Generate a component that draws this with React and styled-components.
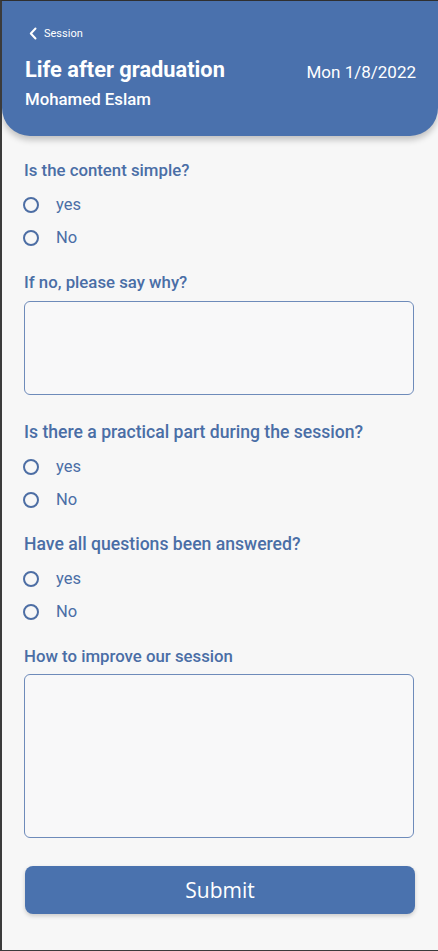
import React from "react";
import styled, { createGlobalStyle } from "styled-components";

const Global = createGlobalStyle`
  html, body { margin: 0; padding: 0; background: #f7f7f7; }
  * { box-sizing: border-box; }
  body { font-family: Roboto, "Noto Sans", Arial, sans-serif; }
`;

const Page = styled.div`
  width: 438px;
  height: 951px;
  background: #f7f7f7;
  border-left: 2px solid #3b3b3b;
  border-top: 1px solid #2f2f2f;
  border-bottom: 1px solid #3b3b3b;
  overflow: hidden;
`;

const Header = styled.header`
  background: #4a71ad;
  border-radius: 0 0 28px 28px;
  padding: 25px 22px 27px 23px;
  box-shadow: 0 4px 6px rgba(0, 0, 0, 0.22);
  color: #fff;
`;

const Back = styled.div`
  display: flex;
  align-items: center;
  gap: 7px;
  height: 14px;
  padding-left: 4px;
  font-size: 11px;
  color: #fff;
`;

const TitleRow = styled.div`
  display: flex;
  justify-content: space-between;
  align-items: center;
  margin-top: 17px;
  height: 26px;
`;

const Title = styled.h1`
  margin: 0;
  font-size: 21.8px;
  font-weight: 700;
  line-height: 24px;
`;

const DateText = styled.span`
  font-size: 17px;
  font-weight: 400;
  margin-top: 4px;
`;

const Speaker = styled.div`
  margin-top: 6px;
  font-size: 16.8px;
  font-weight: 500;
  line-height: 20px;
`;

const Form = styled.form`
  display: flex;
  flex-direction: column;
  gap: 18px;
  padding: 24px 24px 0 22px;
`;

const Section = styled.div`
  display: flex;
  flex-direction: column;
  gap: ${(p) => (p.$field ? "9px" : "8px")};
  margin-bottom: ${(p) => (p.$field ? "9px" : "0")};
`;

const Question = styled.div`
  font-size: ${(p) => p.$size || 16.8}px;
  font-weight: 500;
  line-height: 20px;
  color: #4a6ea6;
  white-space: nowrap;
`;

const RadioGroup = styled.div`
  display: flex;
  flex-direction: column;
`;

const RadioRow = styled.label`
  display: flex;
  align-items: center;
  height: 33px;
  gap: 17px;
  margin-left: -1px;
  font-size: 16.5px;
  color: #4a6ea6;
  cursor: pointer;
`;

const Circle = styled.span`
  width: 16px;
  height: 16px;
  border-radius: 50%;
  border: 2px solid #4d6ea4;
  margin-top: 1px;
`;

const Area = styled.div`
  height: ${(p) => p.$h}px;
  border: 1.5px solid #6e8bba;
  border-radius: 6px;
  background: #f8f8f9;
`;

const FormFooter = styled.div`
  padding: 0 24px 0 22px;
`;

const Submit = styled.button`
  margin: 28px 0 0 1px;
  width: 390px;
  height: 48px;
  border: none;
  border-radius: 8px;
  background: #4a72ae;
  color: #fff;
  font-family: "Open Sans", "Noto Sans", sans-serif;
  font-size: 21px;
  box-shadow: 0 2px 4px rgba(0, 0, 0, 0.18);
`;

const Radios = () => (
  <RadioGroup>
    <RadioRow>
      <Circle />
      yes
    </RadioRow>
    <RadioRow>
      <Circle />
      No
    </RadioRow>
  </RadioGroup>
);

export default function App() {
  return (
    <>
      <Global />
      <Page>
        <Header>
          <Back>
            <svg width="8" height="13" viewBox="0 0 8 13">
              <polyline
                points="6.5,1.5 1.8,6.5 6.5,11.5"
                fill="none"
                stroke="#fff"
                strokeWidth="2"
                strokeLinecap="round"
                strokeLinejoin="round"
              />
            </svg>
            Session
          </Back>
          <TitleRow>
            <Title>Life after graduation</Title>
            <DateText>Mon 1/8/2022</DateText>
          </TitleRow>
          <Speaker>Mohamed Eslam</Speaker>
        </Header>
        <Form>
          <Section>
            <Question>Is the content simple?</Question>
            <Radios />
          </Section>
          <Section $field>
            <Question>If no, please say why?</Question>
            <Area $h={94} />
          </Section>
          <Section>
            <Question $size={17.6}>Is there a practical part during the session?</Question>
            <Radios />
          </Section>
          <Section>
            <Question $size={17.6}>Have all questions been answered?</Question>
            <Radios />
          </Section>
          <Section>
            <Question>How to improve our session</Question>
            <Area $h={164} />
          </Section>
        </Form>
        <FormFooter>
          <Submit type="button">Submit</Submit>
        </FormFooter>
      </Page>
    </>
  );
}
